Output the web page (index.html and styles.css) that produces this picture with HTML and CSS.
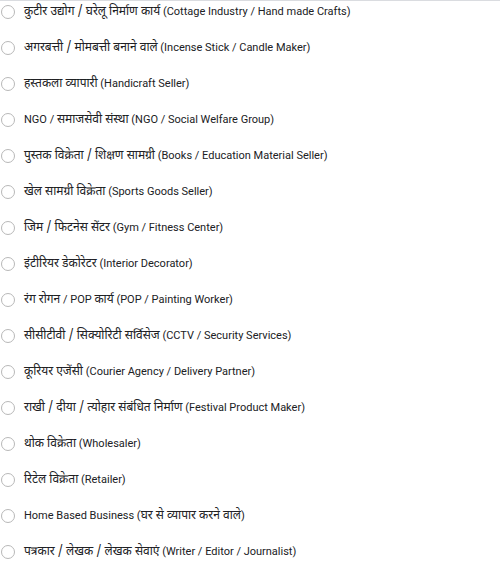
FILE: index.html
```html
<!DOCTYPE html>
<html lang="hi">
<head>
<meta charset="utf-8">
<link rel="stylesheet" href="styles.css">
</head>
<body>
<div class="list">
  <label class="opt"><span class="radio"></span><span class="txt"><span class="hi">कुटीर उद्योग / घरेलू निर्माण कार्य</span> (Cottage Industry / Hand made Crafts)</span></label>
  <label class="opt"><span class="radio"></span><span class="txt"><span class="hi">अगरबत्ती / मोमबत्ती बनाने वाले</span> (Incense Stick / Candle Maker)</span></label>
  <label class="opt"><span class="radio"></span><span class="txt"><span class="hi">हस्तकला व्यापारी</span> (Handicraft Seller)</span></label>
  <label class="opt"><span class="radio"></span><span class="txt">NGO / <span class="hi">समाजसेवी संस्था</span> (NGO / Social Welfare Group)</span></label>
  <label class="opt"><span class="radio"></span><span class="txt"><span class="hi">पुस्तक विक्रेता / शिक्षण सामग्री</span> (Books / Education Material Seller)</span></label>
  <label class="opt"><span class="radio"></span><span class="txt"><span class="hi">खेल सामग्री विक्रेता</span> (Sports Goods Seller)</span></label>
  <label class="opt"><span class="radio"></span><span class="txt"><span class="hi">जिम / फिटनेस सेंटर</span> (Gym / Fitness Center)</span></label>
  <label class="opt"><span class="radio"></span><span class="txt"><span class="hi">इंटीरियर डेकोरेटर</span> (Interior Decorator)</span></label>
  <label class="opt"><span class="radio"></span><span class="txt"><span class="hi">रंग रोगन</span> / POP <span class="hi">कार्य</span> (POP / Painting Worker)</span></label>
  <label class="opt"><span class="radio"></span><span class="txt"><span class="hi">सीसीटीवी / सिक्योरिटी सर्विसेज</span> (CCTV / Security Services)</span></label>
  <label class="opt"><span class="radio"></span><span class="txt"><span class="hi">कूरियर एजेंसी</span> (Courier Agency / Delivery Partner)</span></label>
  <label class="opt"><span class="radio"></span><span class="txt"><span class="hi">राखी / दीया / त्योहार संबंधित निर्माण</span> (Festival Product Maker)</span></label>
  <label class="opt"><span class="radio"></span><span class="txt"><span class="hi">थोक विक्रेता</span> (Wholesaler)</span></label>
  <label class="opt"><span class="radio"></span><span class="txt"><span class="hi">रिटेल विक्रेता</span> (Retailer)</span></label>
  <label class="opt"><span class="radio"></span><span class="txt">Home Based Business (<span class="hi">घर से व्यापार करने वाले</span>)</span></label>
  <label class="opt"><span class="radio"></span><span class="txt"><span class="hi">पत्रकार / लेखक / लेखक सेवाएं</span> (Writer / Editor / Journalist)</span></label>
</div>
</body>
</html>
```
FILE: styles.css
```css
html, body {
  margin: 0;
  padding: 0;
  background: #fff;
}
body {
  border-top: 1px solid #dadce0;
  font-family: Roboto, "Noto Sans Devanagari", sans-serif;
  font-size: 11px;
  color: #202124;
}
.list {
  display: flex;
  flex-direction: column;
  gap: 16px;
  padding-top: 1px;
}
.opt {
  display: flex;
  align-items: center;
  height: 20px;
  gap: 9px;
  padding-left: 1px;
}
.radio {
  box-sizing: border-box;
  width: 14px;
  height: 14px;
  border: 1px solid #b8b8b8;
  border-radius: 50%;
  flex: none;
  margin-top: -1px;
}
.txt {
  white-space: nowrap;
  line-height: 20px;
}
.hi {
  font-family: "Noto Sans Devanagari", Roboto, sans-serif;
  font-size: 12px;
}
```
